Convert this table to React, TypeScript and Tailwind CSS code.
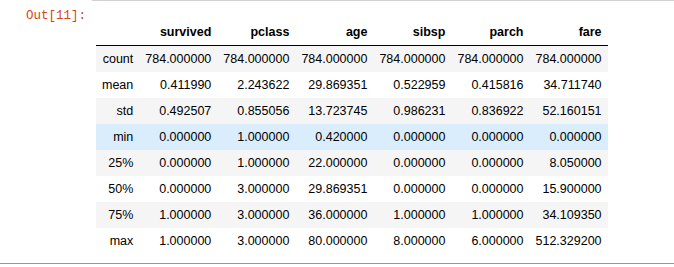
import React from 'react';

const columns = ['survived', 'pclass', 'age', 'sibsp', 'parch', 'fare'];

const rows: [string, string[]][] = [
  ['count', ['784.000000', '784.000000', '784.000000', '784.000000', '784.000000', '784.000000']],
  ['mean', ['0.411990', '2.243622', '29.869351', '0.522959', '0.415816', '34.711740']],
  ['std', ['0.492507', '0.855056', '13.723745', '0.986231', '0.836922', '52.160151']],
  ['min', ['0.000000', '1.000000', '0.420000', '0.000000', '0.000000', '0.000000']],
  ['25%', ['0.000000', '1.000000', '22.000000', '0.000000', '0.000000', '8.050000']],
  ['50%', ['0.000000', '3.000000', '29.869351', '0.000000', '0.000000', '15.900000']],
  ['75%', ['1.000000', '3.000000', '36.000000', '1.000000', '1.000000', '34.109350']],
  ['max', ['1.000000', '3.000000', '80.000000', '8.000000', '6.000000', '512.329200']],
];

export default function App() {
  return (
    <div className="w-[674px] h-[267px] bg-white overflow-hidden">
      <div className="flex h-[264px] border-b border-[#66bb6a]">
        {/* prompt */}
        <div className="w-[92px] shrink-0 pt-[9px] pr-[6px] text-right font-['Liberation_Mono',monospace] text-[12.5px] leading-[14px] text-[#d84315]">
          Out[11]:
        </div>

        {/* output area */}
        <div className="flex-1 border-t border-[#d2d2d2]">
          <table className="ml-1 mt-[18px] border-collapse font-['Liberation_Sans',Arial,sans-serif] text-[12.5px] leading-[14px] text-black">
            <thead>
              <tr className="border-b border-black">
                <th className="w-[43px]" />
                {columns.map((c) => (
                  <th key={c} className="w-[78px] px-[6px] py-[6px] text-right font-bold">
                    {c}
                  </th>
                ))}
              </tr>
            </thead>
            <tbody>
              {rows.map(([label, vals], i) => (
                <tr
                  key={label}
                  className={label === 'min' ? 'bg-[#d9edfd]' : i % 2 === 0 ? 'bg-[#f5f5f5]' : 'bg-white'}
                >
                  <th className="px-[6px] py-[6px] text-right font-normal">{label}</th>
                  {vals.map((v, j) => (
                    <td key={j} className="px-[6px] py-[6px] text-right">
                      {v}
                    </td>
                  ))}
                </tr>
              ))}
            </tbody>
          </table>
        </div>
      </div>
    </div>
  );
}
